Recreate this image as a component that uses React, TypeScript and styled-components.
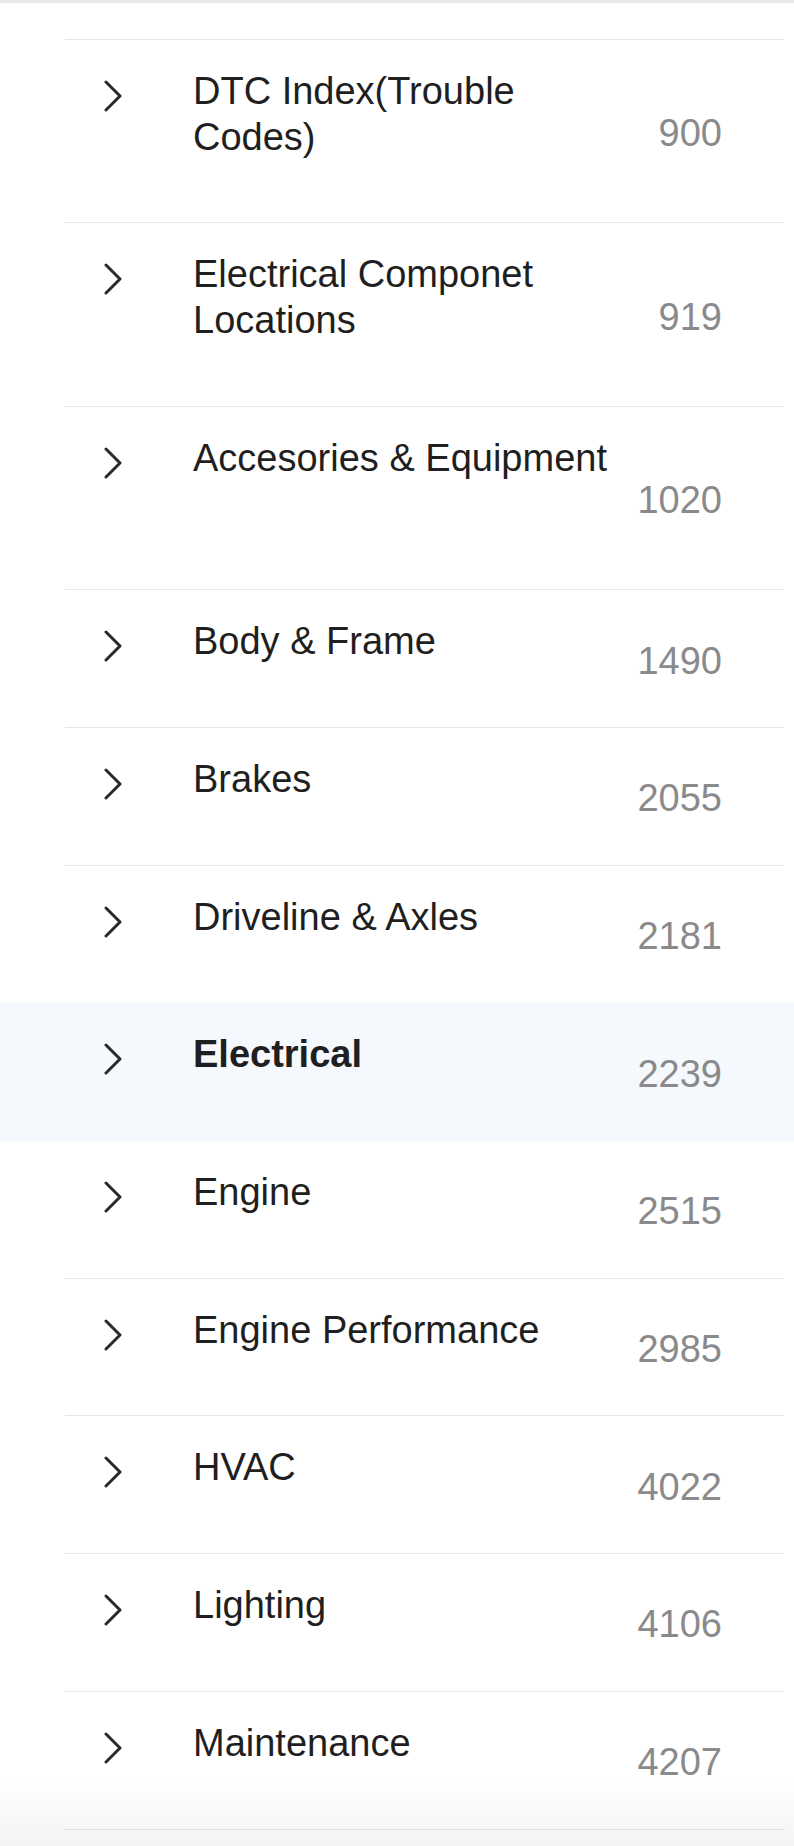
import React from "react";
import styled, { createGlobalStyle } from "styled-components";

const GlobalStyle = createGlobalStyle`
  html, body {
    margin: 0;
    padding: 0;
    background: #ffffff;
  }
  body {
    font-family: "Liberation Sans", Arial, sans-serif;
    -webkit-font-smoothing: antialiased;
  }
`;

const Page = styled.div`
  position: relative;
  min-height: 1846px;
  box-sizing: border-box;
  border-top: 3px solid #e9e9e9;
  background: #ffffff;
  overflow: hidden;
`;

const TopRule = styled.div`
  margin: 36px 10px 0 65px;
  height: 1px;
  background: #e6e6e6;
`;

const List = styled.ul`
  list-style: none;
  margin: 0;
  padding: 0;
`;

const Row = styled.li<{ $active?: boolean }>`
  background: ${(p) => (p.$active ? "#f5f8fc" : "transparent")};
  cursor: pointer;
`;

const RowInner = styled.div<{ $hideRule?: boolean }>`
  display: flex;
  align-items: center;
  margin: 0 10px 0 65px;
  border-bottom: 1px solid ${(p) => (p.$hideRule ? "transparent" : "#e6e6e6")};
`;

const Main = styled.div`
  flex: 1;
  display: flex;
  align-items: flex-start;
  padding: 29px 0 62px;
  min-width: 0;
`;

const ChevronBox = styled.span`
  flex-shrink: 0;
  display: block;
  width: 18px;
  height: 32px;
  margin: 11px 0 0 39px;
`;

const Title = styled.span<{ $active?: boolean; $lines: number }>`
  display: block;
  width: 440px;
  margin-left: 71px;
  font-size: 38px;
  line-height: 45.7px;
  min-height: ${(p) => p.$lines * 45.7}px;
  color: #1f1f21;
  font-weight: ${(p) => (p.$active ? 700 : 400)};
`;

const Count = styled.span`
  flex-shrink: 0;
  margin-right: 62px;
  padding-top: 4px;
  font-size: 38px;
  line-height: 46px;
  color: #8a8a8c;
`;

const BottomShade = styled.div`
  position: absolute;
  left: 0;
  right: 0;
  bottom: 0;
  height: 70px;
  pointer-events: none;
  background: linear-gradient(to bottom, rgba(0, 0, 0, 0), rgba(0, 0, 0, 0.045));
`;

const Chevron = () => (
  <ChevronBox>
    <svg width="18" height="32" viewBox="0 0 18 32" fill="none">
      <polyline
        points="2,2 16,16 2,30"
        stroke="#2a2a2c"
        strokeWidth="3"
        strokeLinecap="round"
        strokeLinejoin="round"
      />
    </svg>
  </ChevronBox>
);

type Item = { title: string; count: number; lines?: number; active?: boolean };

const items: Item[] = [
  { title: "DTC Index(Trouble Codes)", count: 900 },
  { title: "Electrical Componet Locations", count: 919 },
  { title: "Accesories & Equipment", count: 1020, lines: 2 },
  { title: "Body & Frame", count: 1490 },
  { title: "Brakes", count: 2055 },
  { title: "Driveline & Axles", count: 2181 },
  { title: "Electrical", count: 2239, active: true },
  { title: "Engine", count: 2515 },
  { title: "Engine Performance", count: 2985 },
  { title: "HVAC", count: 4022 },
  { title: "Lighting", count: 4106 },
  { title: "Maintenance", count: 4207 },
];

export default function App() {
  return (
    <>
      <GlobalStyle />
      <Page>
        <TopRule />
        <List>
          {items.map((it, i) => {
            const nextActive = items[i + 1]?.active;
            return (
              <Row key={it.title} $active={it.active}>
                <RowInner $hideRule={it.active || nextActive}>
                  <Main>
                    <Chevron />
                    <Title $active={it.active} $lines={it.lines ?? 1}>
                      {it.title}
                    </Title>
                  </Main>
                  <Count>{it.count}</Count>
                </RowInner>
              </Row>
            );
          })}
        </List>
        <BottomShade />
      </Page>
    </>
  );
}
